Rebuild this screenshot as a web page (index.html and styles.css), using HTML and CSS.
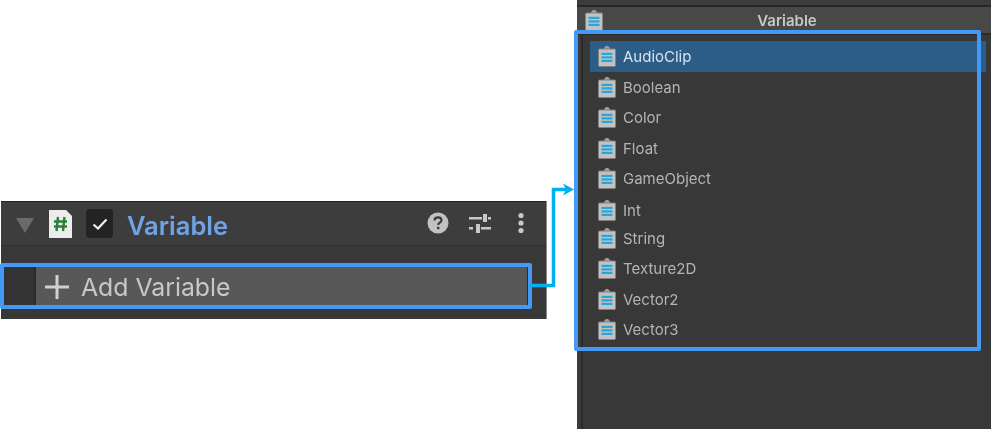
FILE: index.html
```html
<!DOCTYPE html>
<html lang="en">
<head>
  <meta charset="UTF-8" />
  <title>Add Variable</title>
  <link rel="stylesheet" href="styles.css">
</head>
<body>
  <svg width="0" height="0" class="defs">
    <symbol id="clip" viewBox="0 0 18 21">
      <path d="M5.500 4 6.500 1.500C7 .5 8 0 9 0s2 .5 2.500 1.500L12.500 4H15v2H3V4z" fill="#a0a0a0"/>
      <rect x="0.500" y="3" width="17" height="17.500" rx="1" fill="#c2c2c2" stroke="#808080"/>
      <rect x="3.500" y="6.800" width="11" height="2.200" fill="#2aa5dc"/>
      <rect x="3.500" y="10.300" width="11" height="2.200" fill="#2aa5dc"/>
      <rect x="3.500" y="13.800" width="11" height="2.200" fill="#2aa5dc"/>
    </symbol>
  </svg>

  <div class="canvas">
    <div class="left">
      <div class="inspector">
        <div class="comp-head">
          <span class="fold"></span>
          <svg class="script-icon" viewBox="0 0 25 30">
            <path d="M1 1h17l6 6v22H1z" fill="#ececec"/>
            <path d="M10 8 8.500 22M16.500 8 15 22M6 12.500h13M6 17.500h13" stroke="#2a7f38" stroke-width="2.400" fill="none"/>
          </svg>
          <span class="check">
            <svg viewBox="0 0 16 12" width="16" height="12"><path d="M1.500 6.500 6 10.500 14.500 1.500" stroke="#f0f0f0" stroke-width="2.200" fill="none"/></svg>
          </span>
          <span class="comp-name">Variable</span>
          <span class="head-tools">
            <svg class="tool-help" viewBox="0 0 22 22" width="22" height="22">
              <circle cx="11" cy="11" r="10.500" fill="#c2c2c2"/>
              <path d="M7.500 8.500C7.500 6.500 9 5.300 11 5.300s3.500 1.200 3.500 3c0 2.400-3.300 2.400-3.300 4.700" stroke="#3c3c3c" stroke-width="2.200" fill="none"/>
              <rect x="10" y="14.800" width="2.400" height="2.400" fill="#3c3c3c"/>
            </svg>
            <svg class="tool-sliders" viewBox="0 0 22 22" width="22" height="22">
              <path d="M0 5h13v2.500H0zM19 5h3v2.500h-3zM14 2h4v8h-4zM0 15h4v2.500H0zM12 15h10v2.500H12zM7 12h4v9H7z" fill="#c8c8c8"/>
            </svg>
            <svg class="tool-more" viewBox="0 0 6 22" width="6" height="22">
              <circle cx="3" cy="3.500" r="2.600" fill="#c8c8c8"/>
              <circle cx="3" cy="11" r="2.600" fill="#c8c8c8"/>
              <circle cx="3" cy="18.500" r="2.600" fill="#c8c8c8"/>
            </svg>
          </span>
        </div>
        <div class="comp-body">
          <div class="add-row">
            <span class="add-gutter"></span>
            <div class="add-btn">
              <svg viewBox="0 0 26 26" width="26" height="26"><path d="M11.500 1h3v10.500H25v3H14.500V25h-3V14.500H1v-3h10.500z" fill="#d0d0d0"/></svg>
              <span>Add Variable</span>
            </div>
          </div>
        </div>
      </div>
    </div>

    <div class="picker">
      <div class="picker-top"></div>
      <div class="picker-head">
        <svg class="clip head-clip"><use href="#clip"/></svg>
        <span>Variable</span>
      </div>
      <ul class="type-list">
        <li class="type-row selected"><svg class="clip"><use href="#clip"/></svg>AudioClip</li>
        <li class="type-row"><svg class="clip"><use href="#clip"/></svg>Boolean</li>
        <li class="type-row"><svg class="clip"><use href="#clip"/></svg>Color</li>
        <li class="type-row"><svg class="clip"><use href="#clip"/></svg>Float</li>
        <li class="type-row"><svg class="clip"><use href="#clip"/></svg>GameObject</li>
        <li class="type-row short"><svg class="clip"><use href="#clip"/></svg>Int</li>
        <li class="type-row"><svg class="clip"><use href="#clip"/></svg>String</li>
        <li class="type-row"><svg class="clip"><use href="#clip"/></svg>Texture2D</li>
        <li class="type-row"><svg class="clip"><use href="#clip"/></svg>Vector2</li>
        <li class="type-row"><svg class="clip"><use href="#clip"/></svg>Vector3</li>
      </ul>
    </div>

    <!-- annotation layer -->
    <div class="mark mark-add"></div>
    <div class="mark mark-list"></div>
    <svg class="connector" width="50" height="110" viewBox="0 0 50 110">
      <path d="M0 105.500H23.500V9.500H38" stroke="#00b0f0" stroke-width="3.500" fill="none"/>
      <path d="M33 3.500 44 9.500 33 15.500 36 9.500z" fill="#00b0f0"/>
    </svg>
  </div>
</body>
</html>
```

FILE: styles.css
```css
html, body {
  margin: 0;
  padding: 0;
  background-color: white;
}
.defs {
  position: absolute;
}
.canvas {
  position: relative;
  display: flex;
  width: 991px;
  height: 429px;
  overflow: hidden;
  font-family: Inter, 'Liberation Sans', sans-serif;
}

/* left: component in the inspector */
.left {
  padding: 201px 0 0 1px;
  width: 546px;
  flex: none;
}
.inspector {
  height: 118px;
  background-color: #383838;
  border-right: 1px solid #8a8a8a;
  filter: blur(0.6px);
  display: flex;
  flex-direction: column;
}
.comp-head {
  height: 43px;
  padding-left: 15px;
  background-color: #3d3d3d;
  border-top: 1px solid #222;
  border-bottom: 1px solid #2f2f2f;
  display: flex;
  align-items: center;
}
.fold {
  width: 0;
  height: 0;
  margin-top: 3px;
  border-left: 9px solid transparent;
  border-right: 9px solid transparent;
  border-top: 15px solid #6a6a6a;
}
.script-icon {
  width: 25px;
  height: 30px;
  margin-left: 14px;
}
.check {
  width: 27px;
  height: 29px;
  margin-left: 13px;
  background-color: #232323;
  border-radius: 4px;
  display: flex;
  align-items: center;
  justify-content: center;
}
.comp-name {
  margin-left: 14px;
  padding-top: 3px;
  color: #6ea4e6;
  font-size: 25.5px;
  font-weight: 600;
}
.head-tools {
  margin-left: auto;
  margin-right: 22px;
  margin-bottom: 2px;
  display: flex;
  align-items: center;
}
.tool-sliders {
  margin-left: 20px;
}
.tool-more {
  margin-left: 27px;
}
.comp-body {
  padding: 21px 19px 0 2px;
}
.add-row {
  height: 40px;
  display: flex;
}
.add-gutter {
  width: 33px;
  background-color: #333;
  border-right: 2px solid #2b2b2b;
  box-sizing: border-box;
}
.add-btn {
  flex: 1;
  padding-left: 8px;
  background-color: #585858;
  box-shadow: 3px 0 2px #2c2c2c;
  display: flex;
  align-items: center;
  gap: 11px;
  color: #c8c8c8;
  font-size: 24.800px;
}

/* right: type picker window */
.picker {
  width: 414px;
  height: 429px;
  margin-left: 30px;
  flex: none;
  background-color: #383838;
  border-left: 4px solid #3b3b3b;
  box-shadow: inset 2px 0 0 #2a2a2a;
  box-sizing: border-box;
  filter: blur(0.5px);
}
.picker-top {
  height: 5px;
  margin-left: -4px;
  background-color: #3d3d3d;
  border-bottom: 2px solid #272727;
}
.picker-head {
  position: relative;
  height: 26px;
  margin-left: -4px;
  background-color: #484848;
  border-bottom: 2px solid #2a2a2a;
  display: flex;
  align-items: center;
  justify-content: center;
  padding-left: 6px;
  color: #c8c8c8;
  font-size: 15px;
  font-weight: 600;
}
.head-clip {
  position: absolute;
  left: 8px;
  top: 3px;
}
.clip {
  width: 18px;
  height: 21px;
  flex: none;
}
.type-list {
  list-style: none;
  margin: 6px 5px 0 9px;
  padding: 0;
  color: #b4b4b4;
  font-size: 15px;
}
.type-row {
  height: 30.5px;
  padding: 1px 0 0 8px;
  box-sizing: border-box;
  display: flex;
  align-items: center;
  gap: 7px;
}
.type-row.selected {
  background-color: #2c5d87;
  color: #d6e2ee;
}
.type-row.short {
  height: 29px;
  padding-top: 4px;
}

/* annotation boxes */
.mark {
  position: absolute;
  box-sizing: border-box;
  border: 4px solid #4499f5;
  border-radius: 2px;
}
.mark-add {
  left: 0;
  top: 263px;
  width: 532px;
  height: 46px;
}
.mark-list {
  left: 574px;
  top: 30px;
  width: 407px;
  height: 321px;
}
.connector {
  position: absolute;
  left: 530px;
  top: 180px;
}
```
